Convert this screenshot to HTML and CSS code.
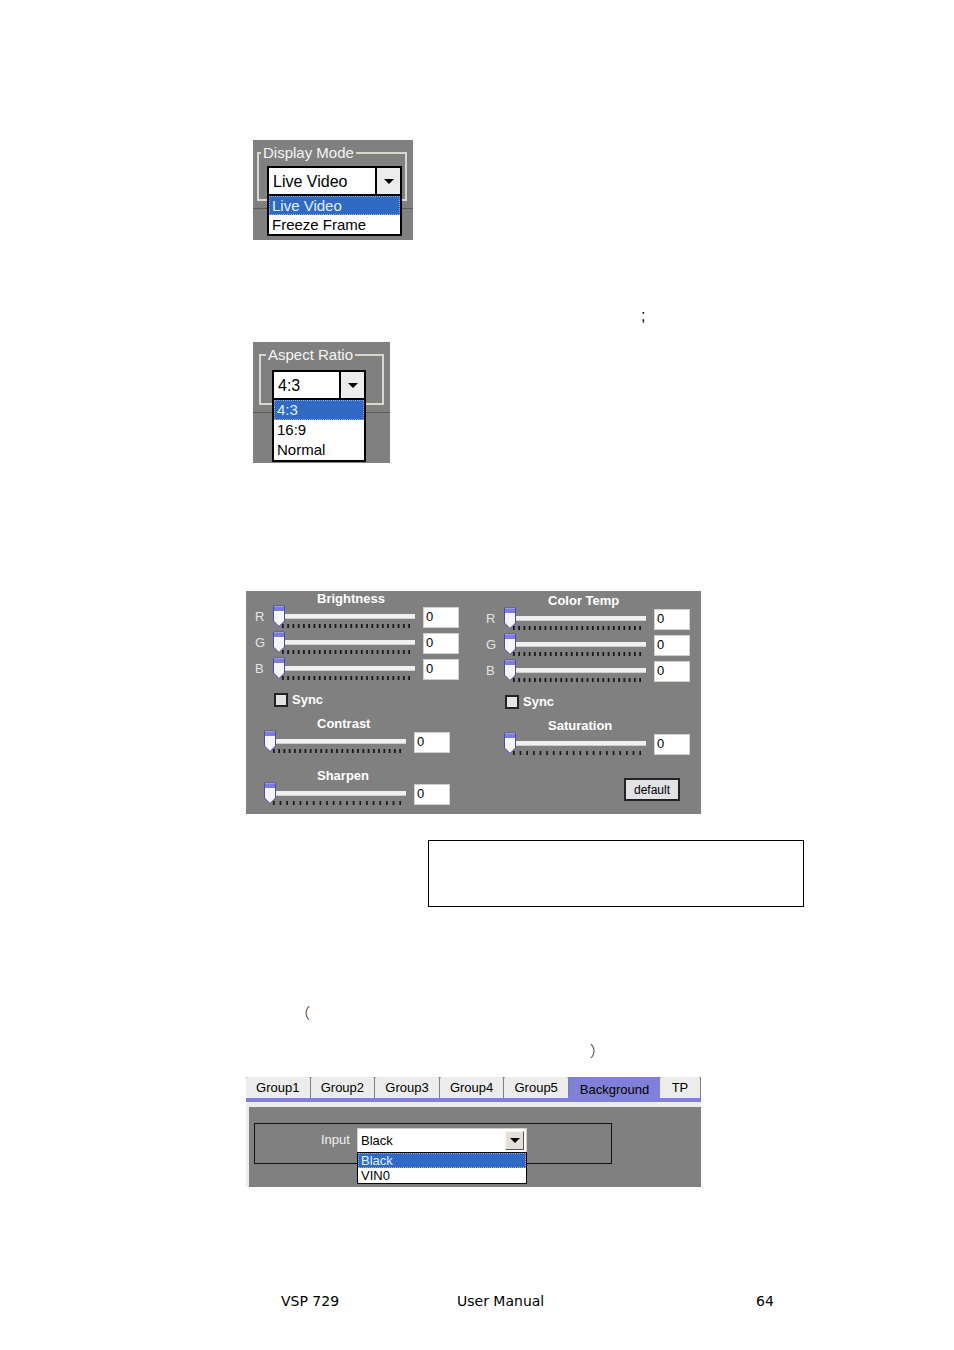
FILE: index.html
```html
<!DOCTYPE html>
<html lang="en">
<head>
  <meta charset="UTF-8" />
  <meta name="viewport" content="width=device-width, initial-scale=1" />
  <title>VSP 729 User Manual</title>
  <link rel="stylesheet" href="styles.css">
</head>
<body>
  <main class="page">
    <section class="dialog display-mode">
      <fieldset>
        <legend>Display Mode</legend>
        <div class="combo">
          <select aria-label="Display Mode">
            <option>Live Video</option>
            <option>Freeze Frame</option>
          </select>
          <span class="arrow"><svg width="10" height="5" viewBox="0 0 10 5"><path d="M0 0h10L5 5z" /></svg></span>
          <ul class="options">
            <li class="selected">Live Video</li>
            <li>Freeze Frame</li>
          </ul>
        </div>
      </fieldset>
      <hr />
    </section>

    <p class="semicolon">;</p>

    <section class="dialog aspect-ratio">
      <fieldset>
        <legend>Aspect Ratio</legend>
        <div class="combo">
          <select aria-label="Aspect Ratio">
            <option>4:3</option>
            <option>16:9</option>
            <option>Normal</option>
          </select>
          <span class="arrow"><svg width="10" height="5" viewBox="0 0 10 5"><path d="M0 0h10L5 5z" /></svg></span>
          <ul class="options">
            <li class="selected">4:3</li>
            <li>16:9</li>
            <li>Normal</li>
          </ul>
        </div>
      </fieldset>
      <hr />
    </section>

    <section class="picture-panel">
      <div class="column">
        <h3>Brightness</h3>
        <div class="row">
          <label for="brightR">R</label>
          <div class="slider">
            <input type="range" id="brightR" value="0" />
            <svg class="ticks"><line x1="0" y1="2" x2="100%" y2="2" pathLength="73" stroke-dasharray="1 2" /></svg>
          </div>
          <input type="text" class="value" value="0" aria-label="Brightness R value" />
        </div>
        <div class="row">
          <label for="brightG">G</label>
          <div class="slider">
            <input type="range" id="brightG" value="0" />
            <svg class="ticks"><line x1="0" y1="2" x2="100%" y2="2" pathLength="73" stroke-dasharray="1 2" /></svg>
          </div>
          <input type="text" class="value" value="0" aria-label="Brightness G value" />
        </div>
        <div class="row">
          <label for="brightB">B</label>
          <div class="slider">
            <input type="range" id="brightB" value="0" />
            <svg class="ticks"><line x1="0" y1="2" x2="100%" y2="2" pathLength="73" stroke-dasharray="1 2" /></svg>
          </div>
          <input type="text" class="value" value="0" aria-label="Brightness B value" />
        </div>
        <label class="sync"><input type="checkbox" /> Sync</label>

        <h3>Contrast</h3>
        <div class="row wide">
          <div class="slider">
            <input type="range" value="0" aria-label="Contrast" />
            <svg class="ticks"><line x1="0" y1="2" x2="100%" y2="2" pathLength="73" stroke-dasharray="1 2" /></svg>
          </div>
          <input type="text" class="value" value="0" aria-label="Contrast value" />
        </div>

        <h3 class="spaced">Sharpen</h3>
        <div class="row wide">
          <div class="slider">
            <input type="range" value="0" aria-label="Sharpen" />
            <svg class="ticks"><line x1="0" y1="2" x2="100%" y2="2" pathLength="77" stroke-dasharray="1 3" /></svg>
          </div>
          <input type="text" class="value" value="0" aria-label="Sharpen value" />
        </div>
      </div>

      <div class="column right">
        <h3>Color Temp</h3>
        <div class="row">
          <label for="tempR">R</label>
          <div class="slider">
            <input type="range" id="tempR" value="0" />
            <svg class="ticks"><line x1="0" y1="2" x2="100%" y2="2" pathLength="73" stroke-dasharray="1 2" /></svg>
          </div>
          <input type="text" class="value" value="0" aria-label="Color Temp R value" />
        </div>
        <div class="row">
          <label for="tempG">G</label>
          <div class="slider">
            <input type="range" id="tempG" value="0" />
            <svg class="ticks"><line x1="0" y1="2" x2="100%" y2="2" pathLength="73" stroke-dasharray="1 2" /></svg>
          </div>
          <input type="text" class="value" value="0" aria-label="Color Temp G value" />
        </div>
        <div class="row">
          <label for="tempB">B</label>
          <div class="slider">
            <input type="range" id="tempB" value="0" />
            <svg class="ticks"><line x1="0" y1="2" x2="100%" y2="2" pathLength="73" stroke-dasharray="1 2" /></svg>
          </div>
          <input type="text" class="value" value="0" aria-label="Color Temp B value" />
        </div>
        <label class="sync"><input type="checkbox" /> Sync</label>

        <h3>Saturation</h3>
        <div class="row">
          <span></span>
          <div class="slider">
            <input type="range" value="0" aria-label="Saturation" />
            <svg class="ticks"><line x1="0" y1="2" x2="100%" y2="2" pathLength="77" stroke-dasharray="1 3" /></svg>
          </div>
          <input type="text" class="value" value="0" aria-label="Saturation value" />
        </div>
        <button type="button" class="default-btn">default</button>
      </div>
    </section>

    <div class="note"></div>

    <div class="brackets" lang="zh">
      <p class="open">（</p>
      <p class="close">）</p>
    </div>

    <section class="group-panel">
      <div class="tabs" role="tablist">
        <button type="button" role="tab">Group1</button>
        <button type="button" role="tab">Group2</button>
        <button type="button" role="tab">Group3</button>
        <button type="button" role="tab">Group4</button>
        <button type="button" role="tab">Group5</button>
        <button type="button" role="tab" class="active">Background</button>
        <button type="button" role="tab" class="last">TP</button>
      </div>
      <div class="tab-body">
        <div class="input-box">
          <label for="inputSource">Input</label>
          <div class="combo">
            <select id="inputSource">
              <option>Black</option>
              <option>VIN0</option>
            </select>
            <span class="arrow"><svg width="10" height="5" viewBox="0 0 10 5"><path d="M0 0h10L5 5z" /></svg></span>
            <ul class="options">
              <li class="selected">Black</li>
              <li>VIN0</li>
            </ul>
          </div>
        </div>
      </div>
    </section>

    <footer>
      <span class="model">VSP 729</span>
      <span class="doc">User Manual</span>
      <span>64</span>
    </footer>
  </main>
</body>
</html>
```
FILE: styles.css
```css
* {
  margin: 0;
  padding: 0;
  box-sizing: border-box;
}

body {
  font-family: "Liberation Sans", Arial, sans-serif;
  font-size: 13px;
  background: #fff;
  color: #000;
}

.page {
  padding: 140px 150px 39px 246px;
}

input,
select,
button {
  font: inherit;
  color: inherit;
}

/* drop-down with its list open */
.combo {
  position: relative;
  display: flex;
  background: #fff;
  border: 1px solid #000;
}

.combo select {
  flex: 1;
  min-width: 0;
  appearance: none;
  border: none;
  background: #fff;
  outline: none;
}

.arrow {
  display: flex;
  align-items: center;
  justify-content: center;
  background: #ececec;
  pointer-events: none;
}

.options {
  position: absolute;
  top: 100%;
  left: -1px;
  right: -1px;
  list-style: none;
  background: #fff;
  border: 1px solid #000;
}

.options .selected {
  background: #316ac5;
  color: #e0f0ff;
  outline: 1px dotted #8fb0e0;
  outline-offset: -1px;
}

/* small dialogs */
.dialog {
  background: #808080;
  margin-left: 7px;
  padding-top: 3px;
  font-size: 16px;
}

.dialog fieldset {
  border: 2px solid #d8d8d0;
  padding: 3px;
}

.dialog legend {
  margin-left: -6px;
  line-height: 20px;
  padding: 0 2px;
  color: #f4f4f4;
  font-size: 15px;
}

.dialog hr {
  border: none;
  border-top: 1px solid #5c5c5c;
  margin-top: 7px;
}

.dialog .combo {
  height: 30px;
  border-width: 2px;
}

.dialog select {
  padding-left: 4px;
}

.dialog .arrow {
  width: 25px;
  border-left: 2px solid #000;
}

.dialog .options {
  left: -2px;
  right: -2px;
  border-width: 2px;
  font-size: 15px;
}

.dialog .options li {
  line-height: 19px;
  padding-left: 3px;
}

.display-mode {
  width: 160px;
  height: 100px;
}

.display-mode fieldset {
  margin: 0 6px 0 4px;
  padding-left: 8px;
}

.aspect-ratio {
  width: 137px;
  height: 121px;
  margin-top: 16px;
}

.aspect-ratio fieldset {
  margin: 0 6px;
  padding: 5px 16px 3px 11px;
}

.aspect-ratio .options li {
  line-height: 20px;
}

.semicolon {
  margin: 66px 0 0 395px;
  font-size: 16px;
  line-height: 20px;
}

/* picture settings */
.picture-panel {
  display: flex;
  gap: 27px;
  max-width: 455px;
  height: 223px;
  margin-top: 128px;
  padding: 0 9px;
  background: #808080;
  color: #fff;
}

.column {
  width: 204px;
}

.column.right {
  padding-top: 2px;
}

.column h3 {
  height: 14px;
  padding-left: 62px;
  font-size: 13px;
  line-height: 16px;
}

.column h3.spaced {
  margin-top: 12px;
}

.row {
  display: grid;
  grid-template-columns: 18px 1fr 36px;
  align-items: start;
  height: 26px;
}

.row.wide {
  grid-template-columns: 1fr 36px;
  margin: 0 9px;
}

.row label {
  line-height: 24px;
  color: #e4e4e4;
}

.slider {
  display: grid;
  margin-right: 8px;
}

.slider input {
  grid-area: 1 / 1;
  appearance: none;
  width: 100%;
  height: 22px;
  background: none;
  z-index: 1;
}

.slider input::-webkit-slider-runnable-track {
  height: 5px;
  background: #f0f0ee;
  border-bottom: 1px solid #d0d0cc;
}

.slider input::-webkit-slider-thumb {
  appearance: none;
  width: 12px;
  height: 22px;
  margin-top: -9px;
  background: url("data:image/svg+xml,%3Csvg xmlns='http://www.w3.org/2000/svg' viewBox='0 0 12 22'%3E%3Cpath d='M.5 1h11v15L6 21.5.5 16z' fill='%23f4f4fa' stroke='%234a4aa8'/%3E%3Cpath d='M1 2h10v4H1z' fill='%237c7ce0'/%3E%3C/svg%3E");
}

.ticks {
  grid-area: 1 / 1;
  align-self: end;
  width: 128px;
  height: 4px;
  margin: 0 0 -1px 9px;
  stroke: #181818;
  stroke-width: 4;
}

.value {
  width: 36px;
  height: 21px;
  margin-top: 2px;
  padding: 0 0 3px 2px;
  border: 1px solid #d4d0c8;
  background: #fff;
  color: #000;
}

.sync {
  display: flex;
  align-items: center;
  gap: 4px;
  height: 33px;
  padding-left: 19px;
  font-weight: bold;
}

.sync input {
  appearance: none;
  width: 14px;
  height: 14px;
  border: 2px solid #222;
  background: #e4e4e4;
}

.default-btn {
  display: block;
  width: 56px;
  height: 23px;
  margin: 20px 10px 0 auto;
  border: 2px solid #222;
  background: #e2e2e6;
  color: #000;
  font-size: 12px;
}

.note {
  height: 67px;
  margin: 26px 0 0 182px;
  border: 1px solid #000;
}

.brackets {
  margin-top: 87px;
  font-family: "Noto Sans CJK SC", sans-serif;
  font-size: 15px;
  font-weight: 300;
  line-height: 38px;
}

.brackets .open {
  margin-left: 49px;
}

.brackets .close {
  margin-left: 344px;
}

/* input groups */
.group-panel {
  max-width: 455px;
  margin-top: 7px;
  background: #ececec;
}

.tabs {
  display: flex;
  height: 25px;
  background: #8080d8;
}

.tabs button {
  flex: 1;
  height: 21px;
  border: none;
  border-right: 1px solid #808080;
  border-radius: 2px 2px 0 0;
  background: #ececec;
}

.tabs .active {
  flex: none;
  width: 91px;
  height: 24px;
  background: #8080d8;
  border: none;
}

.tabs .last {
  flex: none;
  width: 41px;
}

.tab-body {
  height: 80px;
  margin: 5px 0 0 3px;
  padding: 16px 5px;
  background: #808080;
}

.input-box {
  display: flex;
  align-items: flex-start;
  width: 358px;
  height: 41px;
  padding: 4px 0 0 66px;
  border: 1px solid #111;
}

.input-box label {
  width: 36px;
  line-height: 24px;
  color: #f0f0f0;
}

.input-box .combo {
  width: 170px;
  height: 25px;
  border: 1px solid #d4d0c8;
}

.input-box select {
  padding-left: 3px;
}

.input-box .arrow {
  width: 19px;
  margin: 2px;
  background: #e4e0d8;
  border: 1px solid #f8f8f8;
  border-right-color: #555;
  border-bottom-color: #555;
}

.input-box .options li {
  line-height: 15px;
  padding-left: 3px;
}

footer {
  display: flex;
  margin-top: 104px;
  padding-left: 35px;
  font-family: Verdana, "DejaVu Sans", sans-serif;
  font-size: 14px;
  line-height: 20px;
}

.model {
  width: 176px;
}

.doc {
  width: 299px;
}
```
